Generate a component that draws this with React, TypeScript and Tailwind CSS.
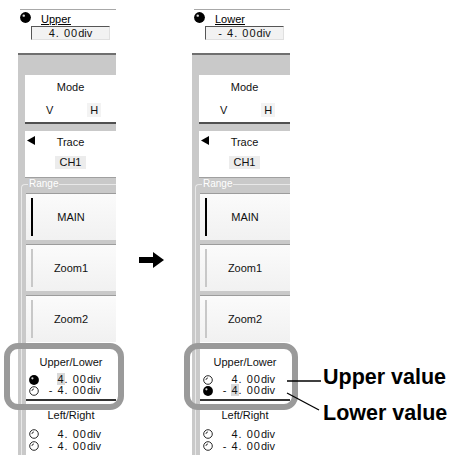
import React from "react"

const ui = "font-['Liberation_Sans',Arial,sans-serif]"

function Ball({ size = 10 }: { size?: number }) {
  return (
    <svg width={size} height={size} viewBox="0 0 10 10" className="shrink-0">
      <circle cx="5" cy="5" r="4.9" fill="#000" />
      <circle cx="3.4" cy="3.3" r="1.1" fill="#fff" opacity="0.85" />
    </svg>
  )
}

function Ring() {
  return (
    <svg width={10} height={10} viewBox="0 0 10 10" className="shrink-0">
      <circle cx="5" cy="5" r="4.3" fill="#fff" stroke="#111" strokeWidth="0.9" />
      <path d="M2.9 5 A2.2 2.2 0 0 1 5 2.9" stroke="#111" strokeWidth="0.8" fill="none" />
    </svg>
  )
}

function Value({ neg, cursor }: { neg?: boolean; cursor?: boolean }) {
  return (
    <span className="tracking-[1px]">
      {neg && "- "}
      <span className={cursor ? "bg-[#d9d9d9]" : ""}>4</span>. 00
      <span className="tracking-normal">div</span>
    </span>
  )
}

function Button({ label, active }: { label: string; active?: boolean }) {
  return (
    <div className="h-[47px] bg-gradient-to-b from-[#fbfbfb] to-[#f1f1f1] border-t border-[#9c9c9c] flex items-center relative">
      <div
        className={`absolute left-[5px] top-[4px] bottom-[4px] w-[2px] ${
          active ? "bg-black" : "bg-[#c8c8c8]"
        }`}
      ></div>
      <div className="w-full text-center text-[11px] text-[#111]">{label}</div>
    </div>
  )
}

function Panel({ lower }: { lower?: boolean }) {
  return (
    <div className={`w-[98px] h-[455px] flex flex-col ${ui} text-[11px] text-[#111]`}>
      <div className="h-[53px] pt-[9px] shrink-0">
        <div className="ml-[2px] border-t border-[#a8a8a8] h-[44px] pt-[2px]">
          <div className="flex items-start h-[13px]">
            <Ball size={11} />
            <span className="ml-[10px] underline decoration-black text-black leading-[13px] mt-[1px]">
              {lower ? "Lower" : "Upper"}
            </span>
          </div>
          <div className="ml-[11px] mt-[1px] w-[79px] h-[14px] bg-[#f2f2f2] border-t border-l border-[#555] border-r border-b border-r-[#e0e0e0] border-b-[#e0e0e0] flex items-center justify-center leading-none">
            <Value neg={lower} />
          </div>
        </div>
      </div>

      <div className="flex-1 bg-[#c9c9c9] border-t-2 border-[#6f6f6f] pl-[7px] pt-[20px] flex flex-col">
        <div className="h-[49px] bg-white border-b-2 border-[#505050] flex flex-col items-center">
          <div className="mt-[6px] leading-[13px]">Mode</div>
          <div className="mt-[9px] flex w-full leading-[14px]">
            <span className="ml-[21px]">V</span>
            <span className="ml-[34px] px-[3px] bg-[#f3f3f3]">H</span>
          </div>
        </div>

        <div className="mt-[7px] h-[47px] bg-white border-b border-[#a0a0a0] relative flex flex-col items-center">
          <svg width="8" height="9" viewBox="0 0 8 9" className="absolute left-[2px] top-[5px]">
            <polygon points="8,0 8,9 0,4.5" fill="#000" />
          </svg>
          <div className="mt-[5px] leading-[13px]">Trace</div>
          <div className="mt-[7px] px-[4px] bg-[#ececec] leading-[13px]">CH1</div>
        </div>

        <div className="relative mt-[6px] -ml-[4px] pl-[4px] border-t border-l border-[#e8e8e8] rounded-tl-[4px] pt-[8px] flex-1 flex flex-col">
          <span className="absolute left-[6px] -top-[7px] text-[10px] text-white leading-[12px] bg-[#c9c9c9] px-[1px]">
            Range
          </span>
          <Button label="MAIN" active />
          <div className="h-[4px]"></div>
          <Button label="Zoom1" />
          <div className="h-[4px]"></div>
          <Button label="Zoom2" />

          <div className="bg-white border-b-2 border-[#333] pt-[13px] pb-[3px] flex flex-col">
            <div className="text-center leading-[14px]">Upper/Lower</div>
            <div className="mt-[5px] flex items-center h-[11px] pl-[3px]">
              {lower ? <Ring /> : <Ball />}
              <div className="flex-1 text-right pr-[15px] leading-none">
                <Value cursor={!lower} />
              </div>
            </div>
            <div className="flex items-center h-[11px] pl-[3px]">
              {lower ? <Ball /> : <Ring />}
              <div className="flex-1 text-right pr-[15px] leading-none">
                <Value neg cursor={lower} />
              </div>
            </div>
          </div>

          <div className="bg-white flex-1 pt-[7px] flex flex-col">
            <div className="text-center leading-[14px]">Left/Right</div>
            <div className="mt-[6px] flex items-center h-[12px] pl-[3px]">
              <Ring />
              <div className="flex-1 text-right pr-[15px] leading-none">
                <Value />
              </div>
            </div>
            <div className="flex items-center h-[12px] pl-[3px]">
              <Ring />
              <div className="flex-1 text-right pr-[15px] leading-none">
                <Value neg />
              </div>
            </div>
          </div>
        </div>
      </div>
    </div>
  )
}

export default function App() {
  return (
    <div className="relative w-[451px] h-[455px] bg-white overflow-hidden flex">
      <div className="ml-[18px]">
        <Panel />
      </div>

      <div className="w-[76px] flex justify-center items-start pt-[252px]">
        <svg width="25" height="16" viewBox="0 0 25 16" className="ml-[-6px]">
          <polygon points="0,5 14,5 14,0 25,8 14,16 14,11 0,11" fill="#000" />
        </svg>
      </div>

      <Panel lower />

      <div className="flex-1 pl-[33px] font-['Liberation_Sans',Arial,sans-serif] font-bold text-[21.5px] text-black leading-none">
        <div className="mt-[367px]">Upper value</div>
        <div className="mt-[14px]">Lower value</div>
      </div>

      {/* highlight frames */}
      <div className="absolute left-[4px] top-[343px] w-[120px] h-[67px] border-[6px] border-[#9a9a9a] rounded-[14px]"></div>
      <div className="absolute left-[184px] top-[343px] w-[114px] h-[67px] border-[6px] border-[#9a9a9a] rounded-[14px]"></div>

      {/* callout lines */}
      <svg className="absolute left-0 top-0" width="451" height="455">
        <line x1="287" y1="381" x2="321" y2="381" stroke="#000" strokeWidth="1.3" />
        <line x1="287" y1="393" x2="319" y2="410" stroke="#000" strokeWidth="1.3" />
      </svg>
    </div>
  )
}
